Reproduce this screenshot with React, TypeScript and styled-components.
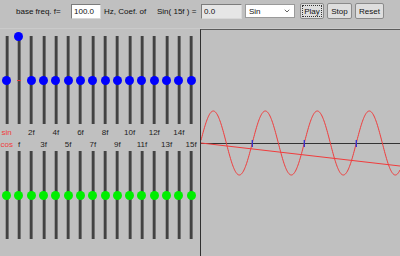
import React from 'react';
import styled, { createGlobalStyle } from 'styled-components';
import { ChevronDown } from 'lucide-react';

const GlobalStyle = createGlobalStyle`
  html, body {
    margin: 0;
    padding: 0;
    background: #c0c0c0;
  }
  body {
    font-family: "Liberation Sans", Arial, sans-serif;
  }
`;

interface BoxProps {
  $w?: number;
  $ml?: number;
}

const S = {
  Applet: styled.div`
    width: 400px;
    height: 256px;
    background: #c0c0c0;
    display: flex;
    flex-direction: column;
    overflow: hidden;
  `,
  Toolbar: styled.div`
    height: 29px;
    box-sizing: border-box;
    padding: 0 0 6px 16px;
    border-bottom: 1px solid #cacaca;
    display: flex;
    align-items: center;
    font-size: 8px;
  `,
  Label: styled.span<BoxProps>`
    width: ${p => p.$w}px;
    margin-left: ${p => p.$ml || 0}px;
    flex: none;
    color: #111;
    white-space: nowrap;
  `,
  Field: styled.input<BoxProps & { $readonly?: boolean }>`
    width: ${p => p.$w}px;
    height: 15px;
    margin: 0 0 0 ${p => p.$ml || 0}px;
    box-sizing: border-box;
    padding: 0 2px;
    font: 8px "Liberation Sans", Arial, sans-serif;
    color: #111;
    background: ${p => (p.$readonly ? '#e6e6e6' : '#ffffff')};
    border: 1px solid #7c7c7c;
    border-right-color: #d8d8d8;
    border-bottom-color: #d8d8d8;
    outline: none;
  `,
  Select: styled.div<BoxProps>`
    width: ${p => p.$w}px;
    height: 14px;
    margin-left: ${p => p.$ml || 0}px;
    box-sizing: border-box;
    padding: 0 3px 0 3px;
    background: #fff;
    border: 1px solid #9a9a9a;
    display: flex;
    align-items: center;
    justify-content: space-between;
    font-size: 8px;
    color: #111;
  `,
  Button: styled.button<BoxProps & { $focused?: boolean }>`
    width: ${p => p.$w}px;
    height: 16px;
    margin-left: ${p => p.$ml || 0}px;
    padding: 0;
    box-sizing: border-box;
    font: 8px "Liberation Sans", Arial, sans-serif;
    color: #111;
    background: #dedede;
    border: 1px solid #8a8a8a;
    border-radius: 2px;
    outline: ${p => (p.$focused ? '1px dotted #333' : 'none')};
    outline-offset: -3px;
  `,
  Body: styled.div`
    flex: 1;
    display: flex;
    min-height: 0;
  `,
  Mixer: styled.div`
    width: 200px;
    flex: none;
    padding-top: 7px;
    display: flex;
    flex-direction: column;
  `,
  SliderRow: styled.div<{ $mt?: number }>`
    height: 88px;
    margin-top: ${p => p.$mt || 0}px;
    padding-left: 0.55px;
    display: grid;
    grid-template-columns: repeat(16, 12.3px);
  `,
  SliderCell: styled.div`
    position: relative;
    display: flex;
    justify-content: center;
  `,
  Track: styled.div`
    width: 4px;
    height: 100%;
    background: linear-gradient(
      90deg,
      #9a9a9a 0 25%,
      #424242 25% 75%,
      #737373 75% 100%
    );
  `,
  ZeroMark: styled.div`
    position: absolute;
    left: 50%;
    top: 44px;
    width: 4px;
    height: 1px;
    margin-left: -2px;
    background: #e04040;
  `,
  Knob: styled.div<{ $color: string }>`
    position: absolute;
    left: 50%;
    width: 9px;
    height: 9px;
    margin-left: -4.5px;
    border-radius: 50%;
    background: ${p => p.$color};
  `,
  LabelRow: styled.div<{ $mt?: number }>`
    height: 12px;
    margin-top: ${p => p.$mt || 0}px;
    padding-left: 0.55px;
    display: grid;
    grid-template-columns: repeat(16, 12.3px);
    align-items: center;
    font-size: 8px;
  `,
  LabelCell: styled.div<{ $red?: boolean }>`
    display: flex;
    justify-content: center;
    white-space: nowrap;
    color: ${p => (p.$red ? '#f03c3c' : '#222')};
  `,
  Graph: styled.div`
    flex: 1;
    border-top: 1px solid #5c5c5c;
    border-left: 1px solid #303030;
    display: flex;
  `,
};

const SIN_LABELS = ['sin', '', '2f', '', '4f', '', '6f', '', '8f', '', '10f', '', '12f', '', '14f', ''];
const COS_LABELS = ['cos', 'f', '', '3f', '', '5f', '', '7f', '', '9f', '', '11f', '', '13f', '', '15f'];
const SIN_VALUES = [0, 1, 0, 0, 0, 0, 0, 0, 0, 0, 0, 0, 0, 0, 0, 0];
const COS_VALUES = new Array(16).fill(0);

const HALF = 44;

const SliderRowView: React.FC<{ values: number[]; color: string; mt?: number }> = ({ values, color, mt }) => (
  <S.SliderRow $mt={mt}>
    {values.map((v, i) => (
      <S.SliderCell key={i}>
        <S.Track />
        <S.ZeroMark />
        <S.Knob $color={color} style={{ top: HALF * (1 - v) - 4.5 }} />
      </S.SliderCell>
    ))}
  </S.SliderRow>
);

const LabelRowView: React.FC<{ labels: string[]; mt?: number }> = ({ labels, mt }) => (
  <S.LabelRow $mt={mt}>
    {labels.map((l, i) => (
      <S.LabelCell key={i} $red={l === 'sin' || l === 'cos'}>
        {l}
      </S.LabelCell>
    ))}
  </S.LabelRow>
);

// graph inner area starts at page (201, 30)
const W = 199;
const H = 226;
const AXIS = 113;

function wavePath() {
  const pts: string[] = [];
  for (let x = 0; x <= W; x += 0.5) {
    const y = AXIS - 32 * Math.sin((2 * Math.PI * (x + 201 - 200.3)) / 52);
    pts.push(`${x.toFixed(1)},${y.toFixed(2)}`);
  }
  return 'M' + pts.join(' L');
}

const Plot: React.FC = () => (
  <svg width={W} height={H} viewBox={`0 0 ${W} ${H}`}>
    <line x1={0} y1={AXIS + 0.5} x2={W} y2={AXIS + 0.5} stroke="#333" strokeWidth={1} />
    <line x1={0} y1={AXIS} x2={W} y2={AXIS + 23} stroke="#f03c3c" strokeWidth={1} />
    <path d={wavePath()} fill="none" stroke="#f03c3c" strokeWidth={1} />
    {[51.3, 103.3, 155.3].map(x => (
      <line key={x} x1={x} y1={AXIS - 3} x2={x} y2={AXIS + 4} stroke="#3030d0" strokeWidth={1.3} />
    ))}
  </svg>
);

const App: React.FC = () => (
  <>
    <GlobalStyle />
    <S.Applet>
      <S.Toolbar>
        <S.Label $w={55}>base freq. f=</S.Label>
        <S.Field $w={30} defaultValue="100.0" />
        <S.Label $w={53} $ml={3}>Hz, Coef. of</S.Label>
        <S.Label $w={44}>Sin( 15f ) =</S.Label>
        <S.Field $w={41} defaultValue="0.0" readOnly $readonly />
        <S.Select $w={50} $ml={3}>
          <span>Sin</span>
          <ChevronDown size={8} strokeWidth={2.5} color="#444" />
        </S.Select>
        <S.Button $w={24} $ml={5} $focused>Play</S.Button>
        <S.Button $w={25} $ml={3}>Stop</S.Button>
        <S.Button $w={29} $ml={3}>Reset</S.Button>
      </S.Toolbar>
      <S.Body>
        <S.Mixer>
          <SliderRowView values={SIN_VALUES} color="#0000ff" />
          <LabelRowView labels={SIN_LABELS} mt={2} />
          <LabelRowView labels={COS_LABELS} />
          <SliderRowView values={COS_VALUES} color="#00ee00" mt={1} />
        </S.Mixer>
        <S.Graph>
          <Plot />
        </S.Graph>
      </S.Body>
    </S.Applet>
  </>
);

export default App;
